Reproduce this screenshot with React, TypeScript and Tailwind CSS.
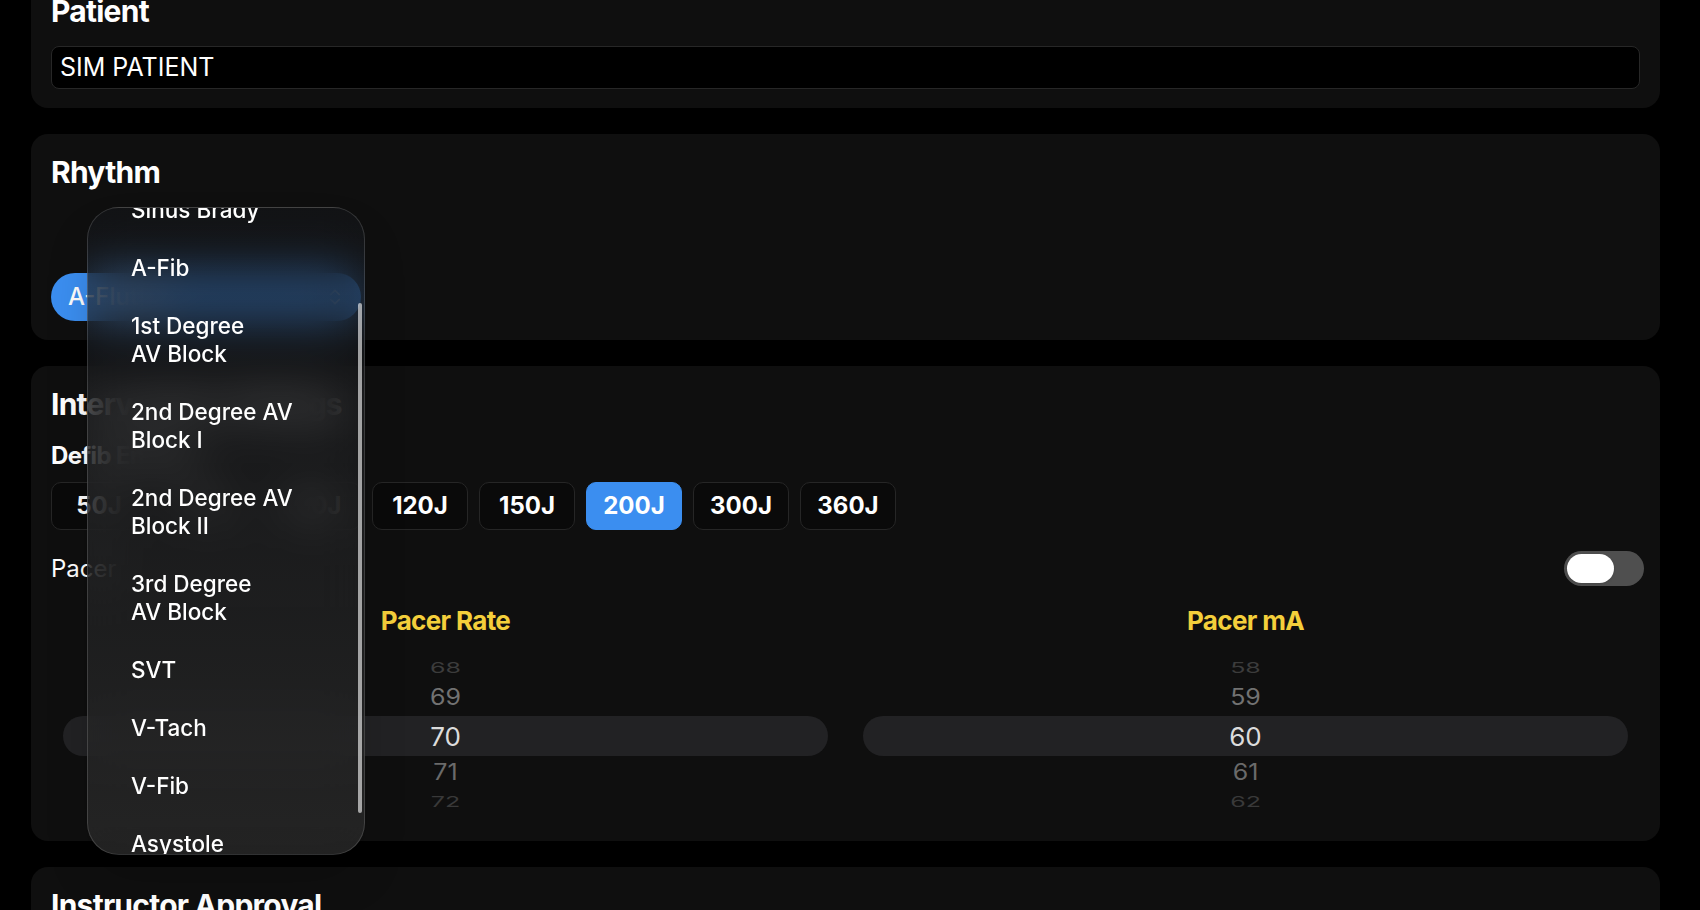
import { ChevronsUpDown } from 'lucide-react';

const energies = ['50J', '70J', '100J', '120J', '150J', '200J', '300J', '360J'];

const rhythms = [
  'Normal Sinus\nRhythm',
  'Sinus Tach',
  'Sinus Brady',
  'A-Fib',
  '1st Degree\nAV Block',
  '2nd Degree AV\nBlock I',
  '2nd Degree AV\nBlock II',
  '3rd Degree\nAV Block',
  'SVT',
  'V-Tach',
  'V-Fib',
  'Asystole',
];

const Card = ({ title, children, className = '' }: { title: string; children?: React.ReactNode; className?: string }) => (
  <section className={`relative rounded-[17px] bg-[#0f0f0f] px-[20px] pb-[19px] pt-[20px] ${className}`}>
    <h2 className="text-[30px] font-bold leading-[36px] tracking-tight">{title}</h2>
    {children}
  </section>
);

function Picker({ title, value }: { title: string; value: number }) {
  return (
    <div className="flex flex-col">
      <div className="text-center text-[26px] font-bold leading-[26px] tracking-tight text-[#f4cf3b]">{title}</div>
      <div className="mt-[16px] flex h-[170px] flex-col px-[12px] pt-[6px] text-center text-[25px]">
        <div className="flex h-[24px] items-center justify-center text-[#3c3c3c]">
          <span className="inline-block scale-y-[0.6]">{value - 2}</span>
        </div>
        <div className="flex h-[36px] items-center justify-center text-[#727272]">
          <span className="inline-block scale-y-90">{value - 1}</span>
        </div>
        <div className="flex h-[40px] items-center justify-center rounded-full bg-[#222224] text-[26px] text-[#dcdcdc]">
          {value}
        </div>
        <div className="flex h-[34px] items-center justify-center text-[#6a6a6a]">
          <span className="inline-block scale-y-90">{value + 1}</span>
        </div>
        <div className="flex h-[24px] items-center justify-center text-[#393939]">
          <span className="inline-block scale-y-[0.6]">{value + 2}</span>
        </div>
      </div>
    </div>
  );
}

function RhythmMenu() {
  return (
    <div className="absolute left-[56px] top-[73px] z-20 h-[648px] w-[278px] overflow-hidden rounded-[32px] border border-white/15 bg-gradient-to-b from-[#15171b]/55 to-[#282828]/85 shadow-2xl backdrop-blur-xl">
      <ul className="-mt-[171px]">
        {rhythms.map((r) => (
          <li key={r} className="whitespace-pre-line py-[15px] pl-[43px] text-[22.5px] font-medium leading-[28px] text-white">
            {r}
          </li>
        ))}
      </ul>
      <div className="absolute right-[2px] top-[95px] h-[510px] w-[4px] rounded-full bg-white/60" />
    </div>
  );
}

export default function App() {
  return (
    <div className="h-[910px] overflow-hidden bg-black font-['Inter','Noto_Sans',sans-serif] text-white">
      <div className="-mt-[27px] flex flex-col gap-[26px] pl-[31px] pr-[40px]">
        <Card title="Patient">
          <div className="mt-[17px] flex h-[43px] items-center rounded-[8px] border border-[#272727] bg-black px-[8px] text-[25px]">
            SIM PATIENT
          </div>
        </Card>

        <Card title="Rhythm">
          <div className="mt-[83px]">
            <button className="flex h-[48px] w-[310px] items-center justify-between rounded-full bg-[#3b8ef0] pl-[17px] pr-[16px] text-[24px] font-medium text-white">
              A-Flutter
              <ChevronsUpDown className="h-5 w-5" />
            </button>
          </div>
          <RhythmMenu />
        </Card>

        <Card title="Intervention Settings" className="pb-[21px]">
          <h3 className="mt-[21px] text-[24px] font-bold leading-[26px] tracking-tight">Defib Energy</h3>
          <div className="mt-[13px] flex gap-[11px]">
            {energies.map((e) => (
              <button
                key={e}
                className={`h-[48px] w-[96px] rounded-[10px] border text-[24px] font-bold ${
                  e === '200J' ? 'border-[#3b8ef0] bg-[#3b8ef0]' : 'border-[#262626] bg-[#0a0a0a]'
                }`}
              >
                {e}
              </button>
            ))}
          </div>
          <div className="mt-[21px] flex h-[35px] items-center justify-between">
            <span className="text-[24px]">Pacer</span>
            <div className="mr-[-4px] flex h-[35px] w-[80px] items-center rounded-full bg-[#4f4f4f] p-[3px]">
              <div className="h-[29px] w-[47px] rounded-full bg-white shadow" />
            </div>
          </div>
          <div className="mt-[22px] grid grid-cols-2 gap-[11px]">
            <Picker title="Pacer Rate" value={70} />
            <Picker title="Pacer mA" value={60} />
          </div>
        </Card>

        <Card title="Instructor Approval">
          <div className="h-[120px]" />
        </Card>
      </div>
    </div>
  );
}
